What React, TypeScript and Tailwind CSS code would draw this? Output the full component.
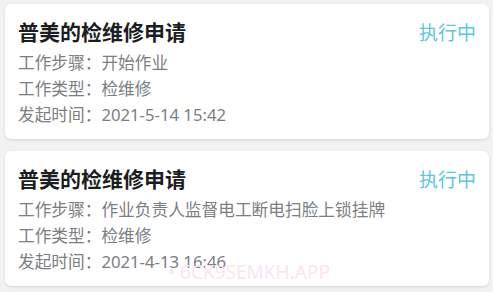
import React from "react";

interface Task {
  title: string;
  step: string;
  type: string;
  time: string;
  status: string;
}

const tasks: Task[] = [
  {
    title: "普美的检维修申请",
    step: "开始作业",
    type: "检维修",
    time: "2021-5-14 15:42",
    status: "执行中",
  },
  {
    title: "普美的检维修申请",
    step: "作业负责人监督电工断电扫脸上锁挂牌",
    type: "检维修",
    time: "2021-4-13 16:46",
    status: "执行中",
  },
];

function TaskCard({ task }: { task: Task }) {
  return (
    <div className="bg-white rounded-[6px] shadow-[0_1px_3px_rgba(0,0,0,0.12)] pl-[13px] pr-[13px] pt-[14px] pb-[11px]">
      <div className="flex items-center justify-between h-[30px]">
        <span className="text-[21px] font-bold text-[#1b1d21]">{task.title}</span>
        <span className="text-[19px] text-[#5cc6df]">{task.status}</span>
      </div>
      <div className="mt-[2px] text-[16.7px] leading-[26px] text-[#7b7e83]">
        <div>工作步骤：{task.step}</div>
        <div>工作类型：{task.type}</div>
        <div>发起时间：{task.time}</div>
      </div>
    </div>
  );
}

export default function App() {
  return (
    <div
      className="relative w-[493px] h-[292px] bg-[#f2f2f2] pl-[5px] pr-[4px] pt-[4px] flex flex-col gap-[12px] overflow-hidden"
      style={{ fontFamily: '"Noto Sans", "Noto Sans CJK SC", sans-serif' }}
    >
      {tasks.map((t, i) => (
        <TaskCard key={i} task={t} />
      ))}
      <div className="absolute left-[168px] top-[258px] text-[19px] text-[#fbe4f4] pointer-events-none">
        • 6CK9SEMKH.APP
      </div>
    </div>
  );
}
